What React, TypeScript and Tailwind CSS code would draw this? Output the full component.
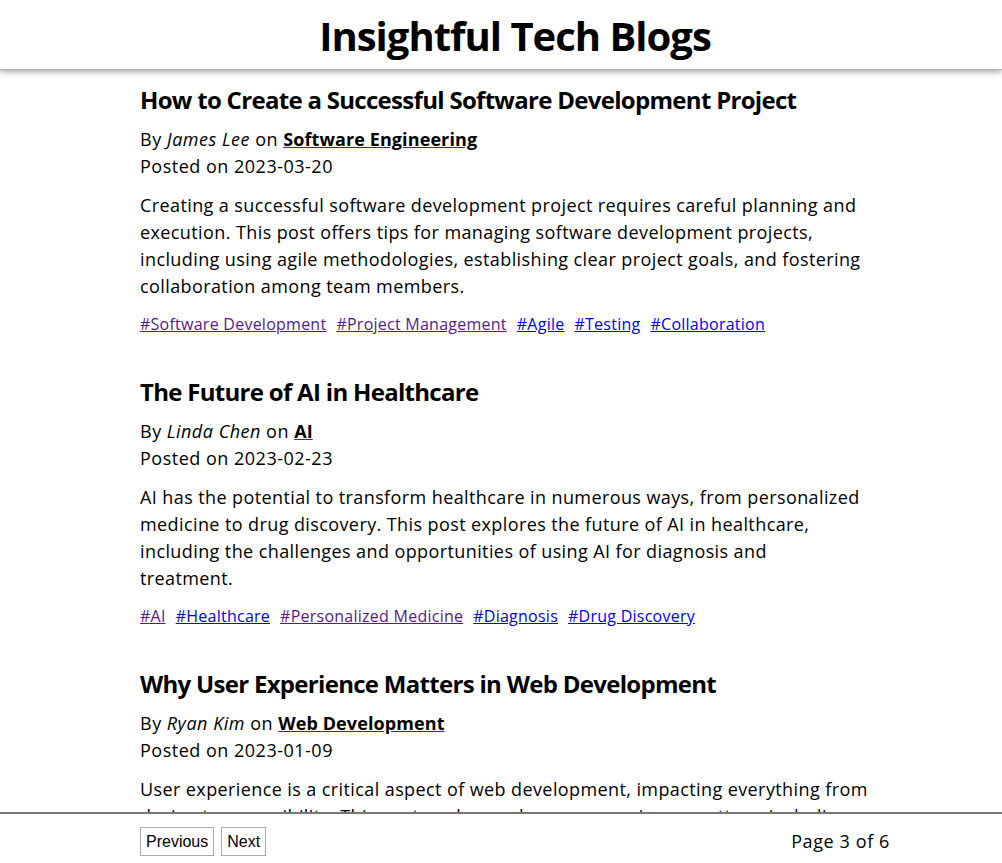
import React from "react";

type Tag = { label: string; visited: boolean };
type Post = {
  title: string;
  author: string;
  category: string;
  date: string;
  body: string;
  tags: Tag[];
};

const posts: Post[] = [
  {
    title: "How to Create a Successful Software Development Project",
    author: "James Lee",
    category: "Software Engineering",
    date: "2023-03-20",
    body:
      "Creating a successful software development project requires careful planning and execution. This post offers tips for managing software development projects, including using agile methodologies, establishing clear project goals, and fostering collaboration among team members.",
    tags: [
      { label: "#Software Development", visited: true },
      { label: "#Project Management", visited: true },
      { label: "#Agile", visited: false },
      { label: "#Testing", visited: false },
      { label: "#Collaboration", visited: false },
    ],
  },
  {
    title: "The Future of AI in Healthcare",
    author: "Linda Chen",
    category: "AI",
    date: "2023-02-23",
    body:
      "AI has the potential to transform healthcare in numerous ways, from personalized medicine to drug discovery. This post explores the future of AI in healthcare, including the challenges and opportunities of using AI for diagnosis and\ntreatment.",
    tags: [
      { label: "#AI", visited: true },
      { label: "#Healthcare", visited: false },
      { label: "#Personalized Medicine", visited: true },
      { label: "#Diagnosis", visited: false },
      { label: "#Drug Discovery", visited: false },
    ],
  },
  {
    title: "Why User Experience Matters in Web Development",
    author: "Ryan Kim",
    category: "Web Development",
    date: "2023-01-09",
    body:
      "User experience is a critical aspect of web development, impacting everything from design to accessibility. This post explores why user experience matters, including best practices for usability testing, accessible design, and performance.",
    tags: [
      { label: "#UX", visited: false },
      { label: "#Web Development", visited: true },
      { label: "#Usability", visited: false },
      { label: "#Accessibility", visited: false },
    ],
  },
];

export default function App() {
  return (
    <div className="min-h-screen bg-white text-black font-['Open_Sans',sans-serif]">
      <header className="bg-white h-[70px] shadow-[0_2px_6px_rgba(0,0,0,0.35)] border-b border-[#b0b0b0]">
        <div className="ml-[140px] w-[750px] h-full flex items-center justify-center pt-[3px]">
          <h1 className="text-[40px] font-bold leading-none tracking-[-1px]">Insightful Tech Blogs</h1>
        </div>
      </header>
      <main className="ml-[140px] w-[750px] pt-[12px] pb-[80px] flex flex-col gap-[38px]">
        {posts.map((p) => (
          <article key={p.title} className="flex flex-col">
            <h2 className="text-[24px] font-bold leading-[36px] mb-[8px] tracking-[-0.7px]">{p.title}</h2>
            <p className="text-[18px] leading-[27px] tracking-[0.5px]">
              By <em>{p.author}</em> on{" "}
              <a href="#" className="font-bold text-black underline decoration-[#551A8B] tracking-[0.1px]">
                {p.category}
              </a>
            </p>
            <p className="text-[18px] leading-[27px] tracking-[0.5px]">Posted on {p.date}</p>
            <p className="text-[18px] leading-[27px] mt-[12px] tracking-[0.4px] whitespace-pre-line">{p.body}</p>
            <div className="flex flex-wrap gap-x-[10px] text-[16px] leading-[24px] mt-[12px] tracking-[0.25px]">
              {p.tags.map((t) => (
                <a
                  key={t.label}
                  href="#"
                  className={
                    t.visited
                      ? "underline text-[#551A8B]"
                      : "underline text-[#0000EE]"
                  }
                >
                  {t.label}
                </a>
              ))}
            </div>
          </article>
        ))}
      </main>
      <footer className="fixed bottom-0 left-0 right-0 h-[51px] bg-white border-t-2 border-[#777]">
        <div className="ml-[140px] w-[750px] h-full flex items-center justify-between pt-[6px]">
          <div className="flex gap-[7px]">
            <button className="border border-[#aaa] bg-white px-[5px] h-[29px] text-[16px] font-['Liberation_Sans',Arial,sans-serif]">
              Previous
            </button>
            <button className="border border-[#aaa] bg-white px-[5px] h-[29px] text-[16px] font-['Liberation_Sans',Arial,sans-serif]">
              Next
            </button>
          </div>
          <span className="text-[18px] tracking-[0.6px]">Page 3 of 6</span>
        </div>
      </footer>
    </div>
  );
}
